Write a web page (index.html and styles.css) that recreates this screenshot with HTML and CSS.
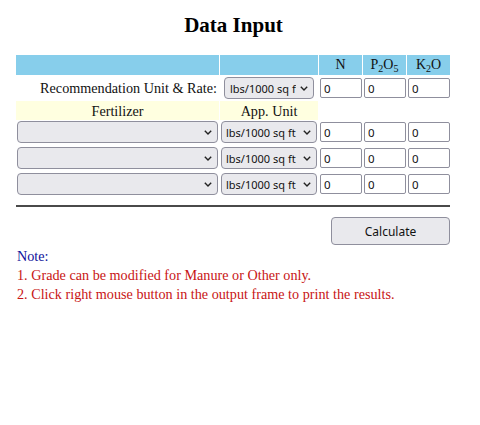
FILE: index.html
```html
<!DOCTYPE html>
<html>
<head>
<meta charset="utf-8">
<title>Data Input</title>
<link rel="stylesheet" href="styles.css">
</head>
<body>
<div class="page">
  <h1 class="title">Data Input</h1>
  <table class="grid">
    <tr class="head">
      <th class="col-fert"></th>
      <th class="col-unit"></th>
      <th class="col-nut">N</th>
      <th class="col-nut">P<sub>2</sub>O<sub>5</sub></th>
      <th class="col-nut">K<sub>2</sub>O</th>
    </tr>
    <tr class="row-rec">
      <td class="label">Recommendation Unit &amp; Rate:</td>
      <td class="center">
        <span class="sel sel-rec">
          <select><option>lbs/1000 sq ft</option></select>
          <svg class="chev" width="8" height="5" viewBox="0 0 8 5"><polyline points="0.8,0.8 4,4 7.2,0.8" fill="none" stroke="#222" stroke-width="1.4"/></svg>
        </span>
      </td>
      <td><input class="num" value="0"></td>
      <td><input class="num" value="0"></td>
      <td><input class="num" value="0"></td>
    </tr>
    <tr class="row-sub">
      <td class="yellow">Fertilizer</td>
      <td class="yellow">App. Unit</td>
      <td></td><td></td><td></td>
    </tr>
    <tr class="row-item">
      <td>
        <span class="sel sel-fert">
          <select><option></option></select>
          <svg class="chev" width="8" height="5" viewBox="0 0 8 5"><polyline points="0.8,0.8 4,4 7.2,0.8" fill="none" stroke="#222" stroke-width="1.4"/></svg>
        </span>
      </td>
      <td class="center">
        <span class="sel sel-unit">
          <select><option>lbs/1000 sq ft</option></select>
          <svg class="chev" width="8" height="5" viewBox="0 0 8 5"><polyline points="0.8,0.8 4,4 7.2,0.8" fill="none" stroke="#222" stroke-width="1.4"/></svg>
        </span>
      </td>
      <td><input class="num" value="0"></td>
      <td><input class="num" value="0"></td>
      <td><input class="num" value="0"></td>
    </tr>
    <tr class="row-item">
      <td>
        <span class="sel sel-fert">
          <select><option></option></select>
          <svg class="chev" width="8" height="5" viewBox="0 0 8 5"><polyline points="0.8,0.8 4,4 7.2,0.8" fill="none" stroke="#222" stroke-width="1.4"/></svg>
        </span>
      </td>
      <td class="center">
        <span class="sel sel-unit">
          <select><option>lbs/1000 sq ft</option></select>
          <svg class="chev" width="8" height="5" viewBox="0 0 8 5"><polyline points="0.8,0.8 4,4 7.2,0.8" fill="none" stroke="#222" stroke-width="1.4"/></svg>
        </span>
      </td>
      <td><input class="num" value="0"></td>
      <td><input class="num" value="0"></td>
      <td><input class="num" value="0"></td>
    </tr>
    <tr class="row-item">
      <td>
        <span class="sel sel-fert">
          <select><option></option></select>
          <svg class="chev" width="8" height="5" viewBox="0 0 8 5"><polyline points="0.8,0.8 4,4 7.2,0.8" fill="none" stroke="#222" stroke-width="1.4"/></svg>
        </span>
      </td>
      <td class="center">
        <span class="sel sel-unit">
          <select><option>lbs/1000 sq ft</option></select>
          <svg class="chev" width="8" height="5" viewBox="0 0 8 5"><polyline points="0.8,0.8 4,4 7.2,0.8" fill="none" stroke="#222" stroke-width="1.4"/></svg>
        </span>
      </td>
      <td><input class="num" value="0"></td>
      <td><input class="num" value="0"></td>
      <td><input class="num" value="0"></td>
    </tr>
  </table>
  <hr class="rule">
  <div class="actions"><button class="btn" type="button">Calculate</button></div>
  <div class="notes">
    <div class="note-title">Note:</div>
    <div class="note">1. Grade can be modified for Manure or Other only.</div>
    <div class="note">2. Click right mouse button in the output frame to print the results.</div>
  </div>
</div>
</body>
</html>
```

FILE: styles.css
```css
html, body {
  margin: 0;
  padding: 0;
  background: #ffffff;
}

body {
  font-family: "Liberation Serif", "Times New Roman", serif;
  color: #111;
}

.page {
  width: 436px;
  padding: 13px 0 0 15px;
}

.title {
  margin: 0 0 17px 0;
  width: 437px;
  text-align: center;
  font-size: 21px;
  line-height: 24px;
  font-weight: bold;
  color: #000;
}

.grid {
  border-collapse: separate;
  border-spacing: 1px;
  font-size: 14.2px;
  table-layout: fixed;
  width: 436px;
}

.grid td, .grid th {
  padding: 0;
}

.col-fert { width: 203px; }
.col-unit { width: 98px; }
.col-nut { width: 43px; }

.head th {
  background: #87ceeb;
  height: 20px;
  font-weight: normal;
  font-size: 14px;
  text-align: center;
  line-height: 16px;
  color: #111;
}

.head sub {
  font-size: 10px;
  line-height: 0;
  vertical-align: -3px;
}

.row-rec td {
  height: 24px;
  vertical-align: middle;
}

.label {
  text-align: right;
  padding-right: 2px !important;
}

.center {
  text-align: center;
}

.row-sub td {
  height: 19px;
  line-height: 16px;
  text-align: center;
  vertical-align: middle;
}

.yellow {
  background: #ffffe0;
}

.row-item td {
  height: 25px;
  vertical-align: top;
}

.row-item td:first-child {
  padding-left: 1px;
}

.sel {
  position: relative;
  display: inline-block;
  vertical-align: top;
}

.sel select {
  -webkit-appearance: none;
  appearance: none;
  display: block;
  box-sizing: border-box;
  height: 22px;
  margin: 0;
  padding: 0 18px 0 4px;
  border: 1px solid #8f8f9d;
  border-radius: 4px;
  background: #e9e9ed;
  font-family: "Noto Sans", "Open Sans", sans-serif;
  font-size: 11px;
  color: #111;
  text-overflow: clip;
}

.sel-fert select { width: 201px; }
.sel-unit select { width: 96px; }
.sel-rec select { width: 90px; padding: 0 17px 0 5px; }

.chev {
  position: absolute;
  right: 6px;
  top: 9px;
  pointer-events: none;
}

.num {
  box-sizing: border-box;
  display: block;
  width: 42px;
  height: 20px;
  margin: 0 0 0 1px;
  padding: 0 3px;
  border: 1px solid #8f8f9d;
  border-radius: 2px;
  background: #fff;
  font-family: "Noto Sans", "Open Sans", sans-serif;
  font-size: 11.5px;
  color: #111;
}

.row-item .num {
  margin-top: 1px;
}

.rule {
  width: 434px;
  margin: 6px 0 0 1px;
  height: 0;
  border: 0;
  border-top: 2px solid #4a4a4a;
}

.actions {
  display: flex;
  justify-content: flex-end;
  width: 435px;
  margin-top: 10px;
}

.btn {
  box-sizing: border-box;
  width: 119px;
  height: 28px;
  margin: 0;
  border: 1px solid #8f8f9d;
  border-radius: 4px;
  background: #e9e9ed;
  font-family: "Noto Sans", "Open Sans", sans-serif;
  font-size: 12px;
  color: #111;
}

.notes {
  margin-top: 2px;
  padding-left: 2px;
  font-size: 14.2px;
  line-height: 19px;
}

.note-title {
  color: #10109a;
}

.note {
  color: #c81414;
}
```
